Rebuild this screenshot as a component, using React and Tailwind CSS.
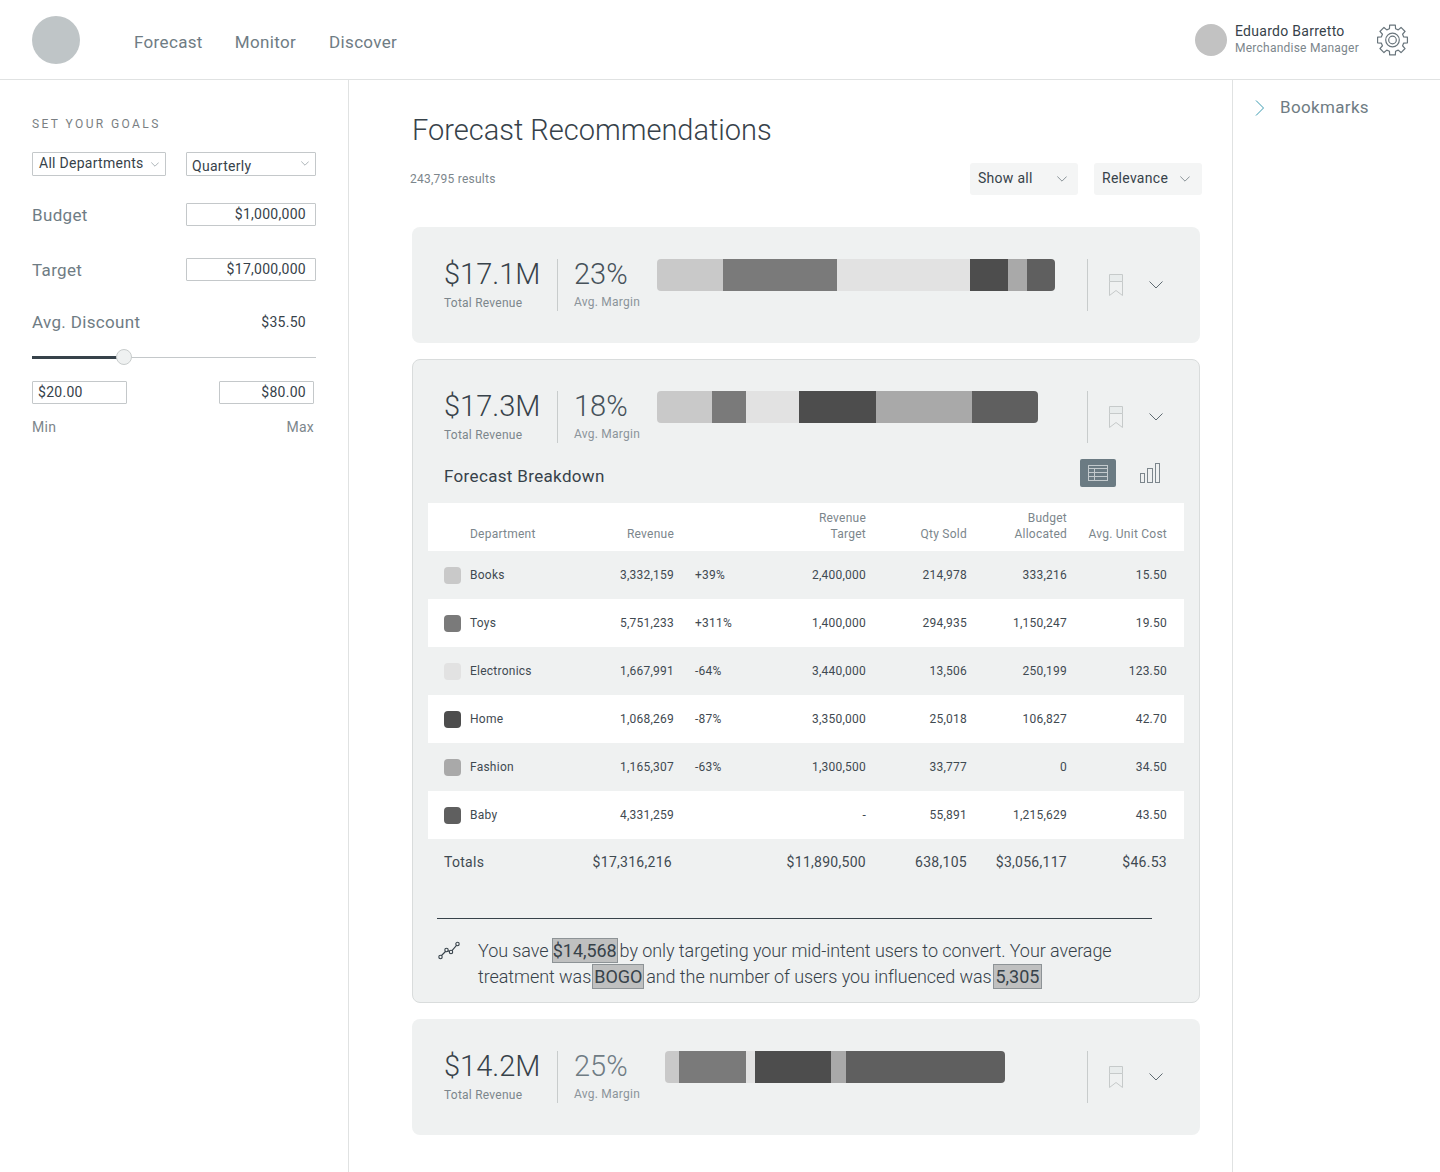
import React from "react";

const C = { a: "bg-[#c9c9c9]", b: "bg-[#7a7a7a]", c: "bg-[#e2e2e2]", d: "bg-[#4d4d4d]", e: "bg-[#a9a9a9]", f: "bg-[#5f5f5f]" };

function gearPath(cx, cy, ro, ri, n) {
  const pts = [];
  const step = (Math.PI * 2) / n;
  for (let i = 0; i < n; i++) {
    const t = i * step - Math.PI / 2;
    const f = (r, d) => `${(cx + r * Math.cos(t + d)).toFixed(2)} ${(cy + r * Math.sin(t + d)).toFixed(2)}`;
    pts.push(f(ri, -step * 0.34), f(ro, -step * 0.24), f(ro, step * 0.24), f(ri, step * 0.34));
  }
  return "M" + pts.join("L") + "Z";
}

function Chevron({ className, color = "#5f6b72", sw = 1 }) {
  return (
    <svg viewBox="0 0 14 8" className={className} fill="none" stroke={color} strokeWidth={sw}>
      <path d="M0.5 0.5 L7 7 L13.5 0.5" />
    </svg>
  );
}

function Bookmark() {
  return (
    <svg width="16" height="24" viewBox="0 0 16 24" fill="none" stroke="#c6caca" strokeWidth="1" className="block">
      <path d="M1.5 1.5H14.5V8.5H1.5Z" fill="#e8ecec" />
      <path d="M1.5 8.5V22.5L8 17.5L14.5 22.5V8.5" />
    </svg>
  );
}

function Summary({ rev, margin, segs, barW, gap, marginColor = "text-[#46525a]" }) {
  return (
    <div className="flex h-[52px]">
      <div className="w-[114px] border-r border-[#c8cccc] shrink-0">
        <div className="text-[29px] leading-[30px] font-light text-[#37424a]">{rev}</div>
        <div className="mt-[6px] text-[12px] leading-[16px] tracking-[0.02em] text-[#7c868c] whitespace-nowrap">Total Revenue</div>
      </div>
      <div className="ml-[16px] w-[67px] shrink-0">
        <div className={`text-[29px] leading-[30px] font-light ${marginColor}`}>{margin}</div>
        <div className="mt-[5px] text-[12px] leading-[16px] tracking-[0.02em] text-[#8b949a] whitespace-nowrap">Avg. Margin</div>
      </div>
      <div className={`flex-1 ${gap}`}>
        <div className={`flex h-[32px] rounded-[4px] overflow-hidden ${barW}`}>
          {segs.map((s, i) => (
            <div key={i} className={`${C[s[0]]} ${s[1]} shrink-0`} />
          ))}
        </div>
      </div>
      <div className="w-[81px] shrink-0 border-l border-[#c8cccc] flex h-[52px]">
        <div className="ml-[20px] mt-[14px]"><Bookmark /></div>
        <div className="ml-[25px] mt-[22px]"><Chevron className="w-[14px] h-[8px] block" /></div>
      </div>
    </div>
  );
}

const rows = [
  ["a", "Books", "3,332,159", "+39%", "2,400,000", "214,978", "333,216", "15.50"],
  ["b", "Toys", "5,751,233", "+311%", "1,400,000", "294,935", "1,150,247", "19.50"],
  ["c", "Electronics", "1,667,991", "-64%", "3,440,000", "13,506", "250,199", "123.50"],
  ["d", "Home", "1,068,269", "-87%", "3,350,000", "25,018", "106,827", "42.70"],
  ["e", "Fashion", "1,165,307", "-63%", "1,300,500", "33,777", "0", "34.50"],
  ["f", "Baby", "4,331,259", "", "-", "55,891", "1,215,629", "43.50"],
];

const gridCols = "grid grid-cols-[42px_108px_96px_64px_128px_101px_100px_100px_17px]";

function Hl({ children, className = "" }) {
  return <span className={`bg-[#bfc0c0] border border-[#8d9396] text-[#37424a] font-normal py-[1px] ${className}`}>{children}</span>;
}

function Field({ children, className = "" }) {
  return (
    <div className={`h-[23px] border border-[#c4c8ca] rounded-[1px] bg-white text-[14px] leading-[20px] tracking-[0.02em] text-[#37424a] text-right ${className}`}>
      {children}
    </div>
  );
}

export default function App() {
  return (
    <div className="w-[1440px] h-[1172px] overflow-hidden bg-white font-['Roboto',sans-serif]">
      <header className="h-[80px] border-b border-[#e0e2e2] flex items-start pl-[32px]">
        <div className="w-[48px] h-[48px] rounded-full bg-[#bfc5c7] mt-[16px] shrink-0" />
        <nav className="flex ml-[54px] mt-[31px] text-[17px] leading-[22px] tracking-[0.02em] text-[#6f7c84]">
          <span>Forecast</span>
          <span className="ml-[32px]">Monitor</span>
          <span className="ml-[33px]">Discover</span>
        </nav>
        <div className="ml-auto flex mt-[24px] pr-[31px]">
          <div className="w-[32px] h-[32px] rounded-full bg-[#c2c2c2]" />
          <div className="ml-[8px] w-[142px]">
            <div className="text-[14px] leading-[16px] tracking-[0.02em] text-[#37424a] -mt-[1px]">Eduardo Barretto</div>
            <div className="text-[12px] leading-[16px] tracking-[0.02em] text-[#7c868c] mt-[1px]">Merchandise Manager</div>
          </div>
          <svg width="32" height="32" viewBox="0 0 32 32" fill="none" stroke="#69757c" strokeWidth="1.2" className="block">
            <path d={gearPath(15.5, 16, 15.2, 11.6, 8)} strokeLinejoin="round" />
            <circle cx="15.5" cy="16" r="6.8" />
            <circle cx="15.5" cy="16" r="3.8" />
          </svg>
        </div>
      </header>

      <div className="flex h-[1092px]">
        <aside className="w-[348px] shrink-0 pl-[32px] pr-[32px]">
          <div className="mt-[37px] text-[12px] leading-[14px] tracking-[0.2em] text-[#7a7f83]">SET YOUR GOALS</div>
          <div className="flex justify-between mt-[21px]">
            <div className="w-[134px] h-[24px] border border-[#c4c8ca] rounded-[1px] flex items-center pl-[6px] text-[14px] leading-[20px] tracking-[0.02em] text-[#37424a]">
              <span className="-mt-[2px]">All Departments</span>
              <Chevron className="w-[8px] h-[5px] ml-[7px]" color="#6f7c84" />
            </div>
            <div className="w-[130px] h-[24px] border border-[#c4c8ca] rounded-[1px] flex items-center pl-[5px] pr-[6px] justify-between text-[14px] leading-[20px] tracking-[0.02em] text-[#37424a]">
              <span className="mt-[3px]">Quarterly</span>
              <Chevron className="w-[8px] h-[5px] -mt-[1px]" color="#6f7c84" />
            </div>
          </div>
          <div className="flex justify-between items-start mt-[27px] h-[23px]">
            <span className="text-[17px] leading-[24px] tracking-[0.02em] text-[#6f7c84]">Budget</span>
            <Field className="w-[130px] pr-[9px]">$1,000,000</Field>
          </div>
          <div className="flex justify-between items-start mt-[32px] h-[23px]">
            <span className="text-[17px] leading-[24px] tracking-[0.02em] text-[#6f7c84]">Target</span>
            <Field className="w-[130px] pr-[9px]">$17,000,000</Field>
          </div>
          <div className="flex justify-between items-center mt-[29px] h-[24px]">
            <span className="text-[17px] leading-[24px] tracking-[0.02em] text-[#6f7c84]">Avg. Discount</span>
            <span className="text-[14px] tracking-[0.02em] text-[#37424a] pr-[10px] mt-[1px]">$35.50</span>
          </div>
          <div className="relative mt-[13px] h-[20px] flex items-center">
            <div className="h-[3px] w-[86px] bg-[#37424a] shrink-0" />
            <div className="h-[1px] flex-1 bg-[#c4c8ca]" />
            <div className="absolute left-[84px] top-[2px] w-[16px] h-[16px] rounded-full bg-[#eff1f1] border border-[#c8cccc]" />
          </div>
          <div className="flex justify-between mt-[14px] pr-[2px]">
            <Field className="w-[95px] !text-left pl-[5px]">$20.00</Field>
            <Field className="w-[95px] pr-[7px]">$80.00</Field>
          </div>
          <div className="flex justify-between mt-[14px] pr-[2px] text-[14px] leading-[18px] tracking-[0.02em] text-[#7c868c]">
            <span>Min</span>
            <span>Max</span>
          </div>
        </aside>

        <main className="w-[885px] shrink-0 border-l border-r border-[#e0e2e2] pl-[63px]">
          <h1 className="mt-[32px] text-[29px] leading-[36px] font-light text-[#37424a]">Forecast Recommendations</h1>
          <div className="flex items-center -ml-[2px] w-[792px] mt-[15px]">
            <span className="text-[12px] tracking-[0.02em] text-[#7c868c]">243,795 results</span>
            <div className="ml-auto w-[108px] h-[32px] rounded-[3px] bg-[#f4f5f5] flex items-center justify-between pl-[8px] pr-[11px] text-[14px] tracking-[0.02em] text-[#37424a]">
              <span className="-mt-[1px]">Show all</span>
              <Chevron className="w-[10px] h-[6px]" />
            </div>
            <div className="ml-[16px] w-[108px] h-[32px] rounded-[3px] bg-[#f4f5f5] flex items-center justify-between pl-[8px] pr-[12px] text-[14px] tracking-[0.02em] text-[#37424a]">
              <span className="-mt-[1px]">Relevance</span>
              <Chevron className="w-[10px] h-[6px]" />
            </div>
          </div>

          <section className="mt-[32px] w-[788px] h-[116px] rounded-[8px] bg-[#eff1f1] pt-[32px] pl-[32px] pr-[32px]">
            <Summary
              rev="$17.1M"
              margin="23%"
              gap="ml-[16px]"
              barW="w-[398px]"
              segs={[["a", "w-[66px]"], ["b", "w-[114px]"], ["c", "w-[133px]"], ["d", "w-[38px]"], ["e", "w-[19px]"], ["f", "w-[28px]"]]}
            />
          </section>

          <section className="mt-[16px] w-[788px] h-[644px] rounded-[8px] bg-[#eff1f1] border border-[#d9dcdc] pt-[31px]">
            <div className="px-[31px]">
              <Summary
                rev="$17.3M"
                margin="18%"
                gap="ml-[16px]"
                barW="w-[381px]"
                segs={[["a", "w-[55px]"], ["b", "w-[34px]"], ["c", "w-[53px]"], ["d", "w-[77px]"], ["e", "w-[96px]"], ["f", "w-[66px]"]]}
              />
            </div>
            <div className="flex items-start h-[60px] pl-[31px]">
              <span className="w-[161px] shrink-0 mt-[22px] text-[17px] leading-[22px] tracking-[0.02em] text-[#37424a] whitespace-nowrap">Forecast Breakdown</span>
              <div className="ml-[475px] mt-[16px] w-[36px] h-[28px] rounded-[2px] bg-[#6b7b83] flex items-center justify-center">
                <svg width="20" height="16" viewBox="0 0 20 16" fill="none" stroke="#c3cacd" strokeWidth="1">
                  <rect x="0.5" y="0.5" width="19" height="15" />
                  <path d="M0.5 3.5H19.5M0.5 7.5H19.5M0.5 11.5H19.5M6.5 3.5V15.5" />
                </svg>
              </div>
              <svg width="22" height="22" viewBox="0 0 22 22" fill="none" stroke="#7c868c" strokeWidth="1" className="ml-[23px] mt-[19px]">
                <rect x="1.5" y="11.5" width="4" height="9" />
                <rect x="8.5" y="6.5" width="5" height="14" />
                <rect x="16.5" y="1.5" width="4" height="19" />
              </svg>
            </div>
            <div className="ml-[15px] w-[756px]">
              <div className={`${gridCols} bg-white h-[48px] items-end pb-[9px] text-[12px] leading-[16px] tracking-[0.02em] text-[#7c868c]`}>
                <span />
                <span>Department</span>
                <span className="text-right">Revenue</span>
                <span />
                <span className="text-right">Revenue<br />Target</span>
                <span className="text-right">Qty Sold</span>
                <span className="text-right">Budget<br />Allocated</span>
                <span className="text-right whitespace-nowrap">Avg. Unit Cost</span>
                <span />
              </div>
              {rows.map((r, i) => (
                <div key={r[1]} className={`${gridCols} h-[48px] items-center text-[12px] tracking-[0.02em] text-[#3f4a51] ${i % 2 ? "bg-white" : ""}`}>
                  <span className={`ml-[16px] w-[17px] h-[17px] rounded-[4px] ${C[r[0]]}`} />
                  <span>{r[1]}</span>
                  <span className="text-right">{r[2]}</span>
                  <span className="pl-[21px]">{r[3]}</span>
                  <span className="text-right">{r[4]}</span>
                  <span className="text-right">{r[5]}</span>
                  <span className="text-right">{r[6]}</span>
                  <span className="text-right">{r[7]}</span>
                  <span />
                </div>
              ))}
              <div className={`${gridCols} h-[48px] items-center pb-[2px] text-[14px] tracking-[0.02em] text-[#3f4a51]`}>
                <span className="col-span-2 pl-[16px]">Totals</span>
                <span className="text-right pr-[2px] whitespace-nowrap">$17,316,216</span>
                <span />
                <span className="text-right">$11,890,500</span>
                <span className="text-right">638,105</span>
                <span className="text-right">$3,056,117</span>
                <span className="text-right">$46.53</span>
                <span />
              </div>
            </div>
            <div className="ml-[24px] mt-[31px] w-[715px] h-[1px] bg-[#37424a]" />
            <div className="flex mt-[19px] ml-[25px]">
              <svg width="22" height="20" viewBox="0 0 22 20" fill="none" stroke="#37424a" strokeWidth="1.1" className="mt-[3px] shrink-0">
                <circle cx="2.5" cy="16" r="1.7" />
                <circle cx="8.5" cy="9" r="1.7" />
                <circle cx="13" cy="11" r="1.7" />
                <circle cx="19.5" cy="3" r="1.7" />
                <path d="M3.5 14.5L7.5 10.5M10 9.7L11.5 10.4M14 9.7L18.5 4.4" />
              </svg>
              <p className="ml-[18px] w-[660px] text-[18px] leading-[26px] tracking-[-0.07px] font-light text-[#37424a] whitespace-nowrap">
                You save <Hl className="-ml-[1px] mr-[2px]">$14,568</Hl>by only targeting your mid-intent users to convert. Your average<br />
                treatment was<Hl className="ml-[1px] mr-[2px] px-[1px]">BOGO</Hl>and the number of users you influenced was<Hl className="ml-[1px] px-[2px]">5,305</Hl>
              </p>
            </div>
          </section>

          <section className="mt-[16px] w-[788px] h-[116px] rounded-[8px] bg-[#eff1f1] pt-[32px] pl-[32px] pr-[32px]">
            <Summary
              rev="$14.2M"
              margin="25%"
              gap="ml-[24px]"
              barW="w-[340px]"
              marginColor="text-[#6f7c84]"
              segs={[["a", "w-[14px]"], ["b", "w-[67px]"], ["c", "w-[9px]"], ["d", "w-[76px]"], ["e", "w-[15px]"], ["f", "w-[159px]"]]}
            />
          </section>
        </main>

        <aside className="flex-1 flex items-start pl-[22px] pt-[16px]">
          <svg width="10" height="16" viewBox="0 0 10 16" fill="none" stroke="#3a9ab0" strokeWidth="1" className="mt-[4px] shrink-0">
            <path d="M1 0.5L8.5 8L1 15.5" />
          </svg>
          <span className="ml-[15px] text-[17px] leading-[23px] tracking-[0.02em] text-[#6f7c84]">Bookmarks</span>
        </aside>
      </div>
    </div>
  );
}
